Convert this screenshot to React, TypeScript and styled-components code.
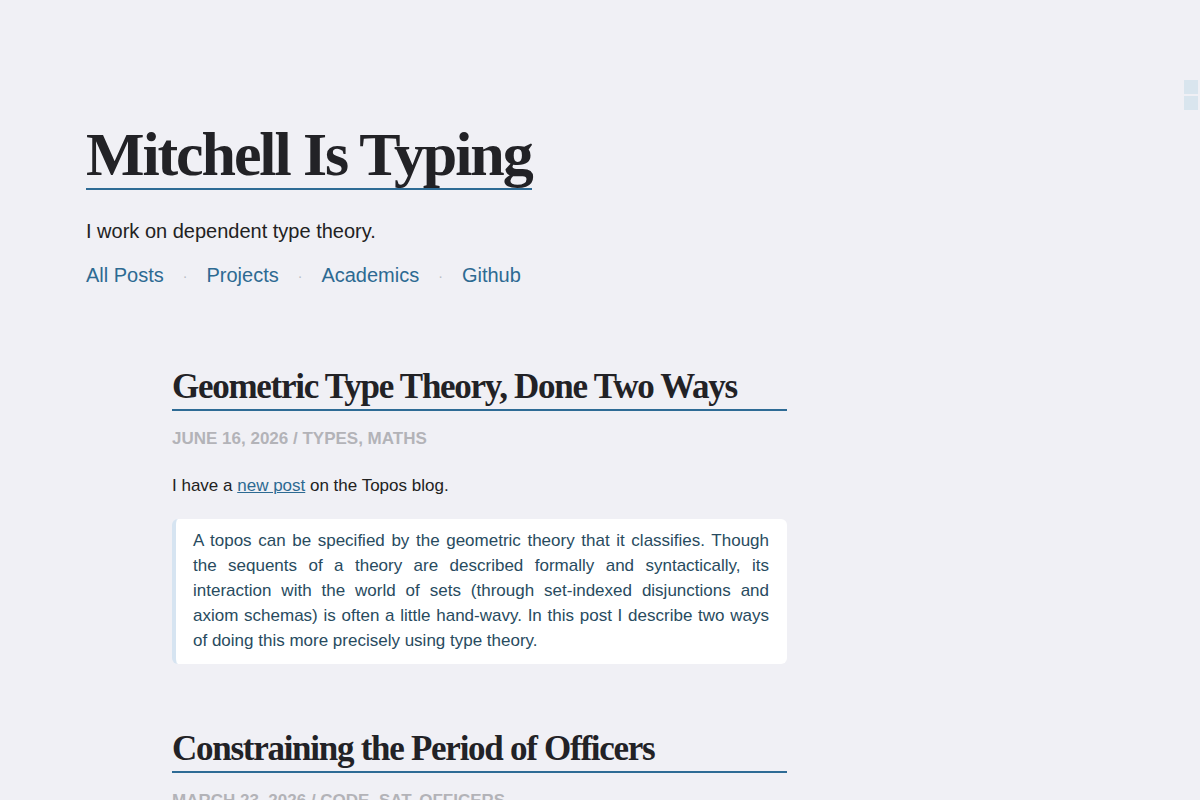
import React from "react";
import styled, { createGlobalStyle } from "styled-components";

const Global = createGlobalStyle`
  html, body { margin: 0; padding: 0; background: #f0f0f5; }
  body { font-family: "Liberation Sans", Arial, sans-serif; color: #222; }
`;

const Page = styled.div`
  padding: 120px 0 0 86px;
  box-sizing: border-box;
  height: 800px;
  overflow: hidden;
`;

const Header = styled.header`
  display: flex;
  flex-direction: column;
  align-items: flex-start;
`;

const SiteTitle = styled.h1`
  margin: 0;
  font-family: "Liberation Serif", "Times New Roman", serif;
  font-weight: 700;
  font-size: 62px;
  letter-spacing: -2.1px;
  line-height: 68px;
  color: #222226;
  border-bottom: 2px solid #2e6b95;
`;

const Tagline = styled.p`
  margin: 30px 0 0;
  font-size: 20px;
  color: #222;
`;

const Nav = styled.nav`
  display: flex;
  align-items: center;
  gap: 19px;
  margin-top: 21px;
`;

const NavLink = styled.a`
  font-size: 20px;
  color: #2d6a92;
  text-decoration: none;
`;

const Dot = styled.span`
  color: #b8bcc4;
  font-size: 14px;
`;

const Posts = styled.main`
  width: 615px;
  margin: 78px 0 0 86px;
  display: flex;
  flex-direction: column;
  gap: 63px;
`;

const Post = styled.article`
  display: flex;
  flex-direction: column;
`;

const PostTitle = styled.h2`
  margin: 0;
  font-family: "Liberation Serif", "Times New Roman", serif;
  font-weight: 700;
  font-size: 35px;
  letter-spacing: -1.27px;
  line-height: 44px;
  color: #222226;
  border-bottom: 2px solid #2e6b95;
  white-space: nowrap;
`;

const Meta = styled.div`
  margin-top: 18px;
  font-size: 17px;
  font-weight: 700;
  color: #b3b3b8;
  text-transform: uppercase;
`;

const Para = styled.p`
  margin: 27px 0 0;
  font-size: 17px;
  line-height: 20px;
  color: #222;
`;

const Link = styled.a`
  color: #2d6a92;
  text-decoration: underline;
`;

const Quote = styled.blockquote`
  margin: 23px 0 0;
  padding: 9px 18px 11px 17px;
  background: #ffffff;
  border-left: 4px solid #d6e4f1;
  border-radius: 6px;
  font-size: 17px;
  line-height: 25px;
  color: #284b60;
  text-align: justify;
`;

const SideWidget = styled.div`
  position: fixed;
  top: 80px;
  right: 2px;
  display: flex;
  flex-direction: column;
  gap: 2px;
`;

const Square = styled.div`
  width: 14px;
  height: 14px;
  background: #d9e5ee;
`;

const navItems = ["All Posts", "Projects", "Academics", "Github"];

export default function App() {
  return (
    <>
      <Global />
      <Page>
        <Header>
          <SiteTitle>Mitchell Is Typing</SiteTitle>
          <Tagline>I work on dependent type theory.</Tagline>
          <Nav>
            {navItems.map((n, i) => (
              <React.Fragment key={n}>
                {i > 0 && <Dot>·</Dot>}
                <NavLink href="#">{n}</NavLink>
              </React.Fragment>
            ))}
          </Nav>
        </Header>
        <Posts>
          <Post>
            <PostTitle>Geometric Type Theory, Done Two Ways</PostTitle>
            <Meta>June 16, 2026 / Types, Maths</Meta>
            <Para>
              I have a <Link href="#">new post</Link> on the Topos blog.
            </Para>
            <Quote>
              A topos can be specified by the geometric theory that it classifies. Though the
              sequents of a theory are described formally and syntactically, its interaction with
              the world of sets (through set-indexed disjunctions and axiom schemas) is often a
              little hand-wavy. In this post I describe two ways of doing this more precisely using
              type theory.
            </Quote>
          </Post>
          <Post>
            <PostTitle>Constraining the Period of Officers</PostTitle>
            <Meta>March 23, 2026 / Code, SAT, Officers</Meta>
          </Post>
        </Posts>
      </Page>
      <SideWidget>
        <Square />
        <Square />
      </SideWidget>
    </>
  );
}
